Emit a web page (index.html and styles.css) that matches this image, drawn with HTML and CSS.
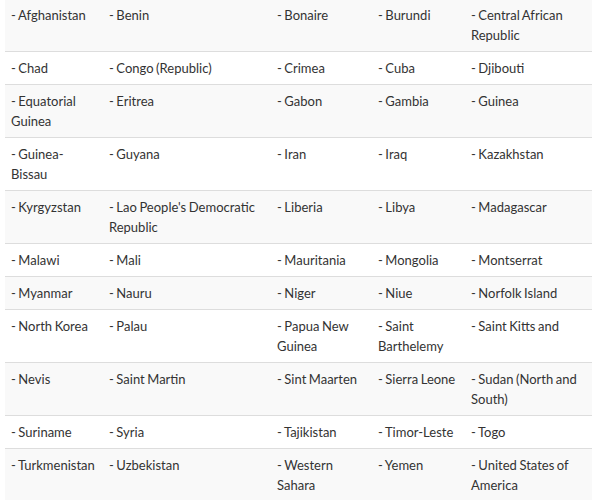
FILE: index.html
```html
<!DOCTYPE html>
<html>
<head>
<meta charset="utf-8">
<link rel="stylesheet" href="styles.css">
</head>
<body>
<div class="wrap">
<table class="countries">
<colgroup>
<col class="c1"><col class="c2"><col class="c3"><col class="c4"><col class="c5">
</colgroup>
<tbody>
<tr><td>- Afghanistan</td><td>- Benin</td><td>- Bonaire</td><td>- Burundi</td><td>- Central African Republic</td></tr>
<tr><td>- Chad</td><td>- Congo (Republic)</td><td>- Crimea</td><td>- Cuba</td><td>- Djibouti</td></tr>
<tr><td>- Equatorial Guinea</td><td>- Eritrea</td><td>- Gabon</td><td>- Gambia</td><td>- Guinea</td></tr>
<tr><td>- Guinea-Bissau</td><td>- Guyana</td><td>- Iran</td><td>- Iraq</td><td>- Kazakhstan</td></tr>
<tr><td>- Kyrgyzstan</td><td>- Lao People's Democratic Republic</td><td>- Liberia</td><td>- Libya</td><td>- Madagascar</td></tr>
<tr><td>- Malawi</td><td>- Mali</td><td>- Mauritania</td><td>- Mongolia</td><td>- Montserrat</td></tr>
<tr><td>- Myanmar</td><td>- Nauru</td><td>- Niger</td><td>- Niue</td><td>- Norfolk Island</td></tr>
<tr><td>- North Korea</td><td>- Palau</td><td>- Papua New Guinea</td><td>- Saint Barthelemy</td><td>- Saint Kitts and</td></tr>
<tr><td>- Nevis</td><td>- Saint Martin</td><td>- Sint Maarten</td><td>- Sierra Leone</td><td>- Sudan (North and South)</td></tr>
<tr><td>- Suriname</td><td>- Syria</td><td>- Tajikistan</td><td>- Timor-Leste</td><td>- Togo</td></tr>
<tr><td>- Turkmenistan</td><td>- Uzbekistan</td><td>- Western Sahara</td><td>- Yemen</td><td>- United States of America</td></tr>
</tbody>
</table>
</div>
</body>
</html>
```
FILE: styles.css
```css
html, body {
  margin: 0;
  padding: 0;
  background: #fff;
}
.wrap {
  padding-left: 5px;
  margin-top: -1px;
  overflow: hidden;
}
.countries {
  border-collapse: collapse;
  table-layout: fixed;
  width: 587px;
  font-family: Lato, "Liberation Sans", sans-serif;
  font-size: 13px;
  line-height: 20px;
  word-spacing: -0.8px;
  color: #333;
}
.c1 { width: 98px; }
.c2 { width: 168px; }
.c3 { width: 101px; }
.c4 { width: 93px; }
.c5 { width: 127px; }
.countries td {
  padding: 6px;
  vertical-align: top;
  border-bottom: 1px solid #ddd;
}
.countries tr:nth-child(odd) td {
  background: #f9f9f9;
}
```
